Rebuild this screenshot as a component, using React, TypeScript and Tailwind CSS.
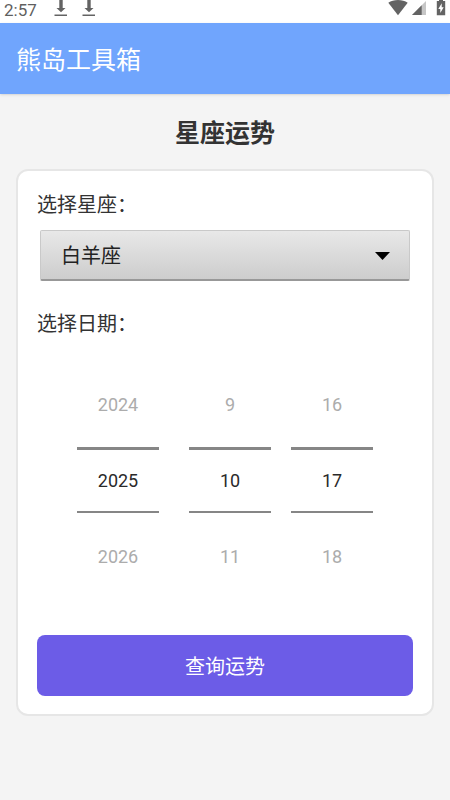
import { useState } from 'react';

const SIGNS = [
  '白羊座', '金牛座', '双子座', '巨蟹座', '狮子座', '处女座',
  '天秤座', '天蝎座', '射手座', '摩羯座', '水瓶座', '双鱼座',
];

const DownloadIcon = () => (
  <svg width="14" height="16" viewBox="0 0 14 16" fill="#636363" aria-hidden="true">
    <path d="M5.300 0h3.400v8h2.800L7 12.300 2.500 8h2.800z" />
    <path d="M.5 14.500h12.500V16H.5z" />
  </svg>
);

const StatusBar = () => (
  <div className="flex h-[23px] items-start justify-between bg-white pl-1 pr-1">
    <div className="flex items-start">
      <span className="w-[50px] text-[17px] leading-5 text-[#5f5f5f]">2:57</span>
      <div className="flex gap-[14px]">
        <DownloadIcon />
        <DownloadIcon />
      </div>
    </div>
    <div className="flex items-start">
      <svg width="20" height="16" viewBox="0 0 20 16" fill="#636363" aria-hidden="true">
        <path d="M.3 2.800C3 .8 6.200 0 10 0s7 .8 9.700 2.800L10 15.200z" />
      </svg>
      <svg className="ml-1" width="14" height="16" viewBox="0 0 14 16" aria-hidden="true">
        <path d="M14 1v14H0z" fill="#c6c6c6" />
        <path d="M9.700 5.300V15H0z" fill="#636363" />
      </svg>
      <svg className="ml-[10px]" width="10" height="16" viewBox="0 0 10 16" aria-hidden="true">
        <path d="M3 0h4v1h2.200v14.200H.8V1H3z" fill="#636363" />
        <path d="M5.700 3.200v4h2L4.300 13V9h-2z" fill="#fff" />
      </svg>
    </div>
  </div>
);

type WheelProps = {
  label: string;
  value: number;
  onChange: (value: number) => void;
  className?: string;
};

const Wheel = ({ label, value, onChange, className = '' }: WheelProps) => (
  <div className={`flex w-[82px] flex-col items-stretch text-lg ${className}`}>
    <button type="button" onClick={() => onChange(value - 1)} className="h-[84px] text-[#acacac]">
      {value - 1}
    </button>
    <input
      aria-label={label}
      inputMode="numeric"
      value={value}
      onChange={(e) => onChange(Number(e.target.value) || 0)}
      className="h-[66px] w-full border-t-[3px] border-b-2 border-[#868686] bg-transparent text-center text-[#2a2a2a] outline-none"
    />
    <button type="button" onClick={() => onChange(value + 1)} className="h-[88px] text-[#acacac]">
      {value + 1}
    </button>
  </div>
);

export default function App() {
  const [sign, setSign] = useState(SIGNS[0]);
  const [year, setYear] = useState(2025);
  const [month, setMonth] = useState(10);
  const [day, setDay] = useState(17);

  return (
    <div
      lang="zh-CN"
      className="min-h-screen bg-[#f4f4f4] font-['Roboto','Noto_Sans_CJK_SC',sans-serif] text-[#333333]"
    >
      <StatusBar />
      <header className="flex h-[71px] items-center bg-[#70a5fd] px-4 pt-1 shadow-sm">
        <span className="text-[25px] text-white">熊岛工具箱</span>
      </header>

      <main className="px-4">
        <h1 className="pt-[22px] pb-[17px] text-center text-[25px] leading-9 font-bold">星座运势</h1>

        <form
          onSubmit={(e) => e.preventDefault()}
          className="rounded-xl border-2 border-[#e6e6e6] bg-white px-[19px] pt-[19px] pb-[18px]"
        >
          <label htmlFor="sign" className="block text-xl leading-[30px]">选择星座：</label>
          <div className="relative mx-[3px] mt-[10px]">
            <select
              id="sign"
              value={sign}
              onChange={(e) => setSign(e.target.value)}
              className="block h-[51px] w-full appearance-none rounded-xs border border-[#c9c9c9] border-b-2 border-b-[#989898] bg-linear-to-b from-[#e8e8e8] to-[#cdcdcd] pt-[2px] pl-5 text-xl text-[#222222]"
            >
              {SIGNS.map((s) => (
                <option key={s}>{s}</option>
              ))}
            </select>
            <svg
              className="pointer-events-none absolute top-[22px] right-5"
              width="15" height="8" viewBox="0 0 15 8" aria-hidden="true"
            >
              <path d="M0 0h15L7.500 8z" fill="#000" />
            </svg>
          </div>

          <fieldset className="mt-7">
            <legend className="block text-xl leading-[30px]">选择日期：</legend>
            <div className="flex justify-center gap-5 pt-6 pb-[34px]">
              <Wheel label="年" value={year} onChange={setYear} className="mr-[10px]" />
              <Wheel label="月" value={month} onChange={setMonth} />
              <Wheel label="日" value={day} onChange={setDay} />
            </div>
          </fieldset>

          <button type="submit" className="block h-[61px] w-full rounded-lg bg-[#6c5ce7] pt-[2px] text-xl text-white">
            查询运势
          </button>
        </form>
      </main>
    </div>
  );
}
